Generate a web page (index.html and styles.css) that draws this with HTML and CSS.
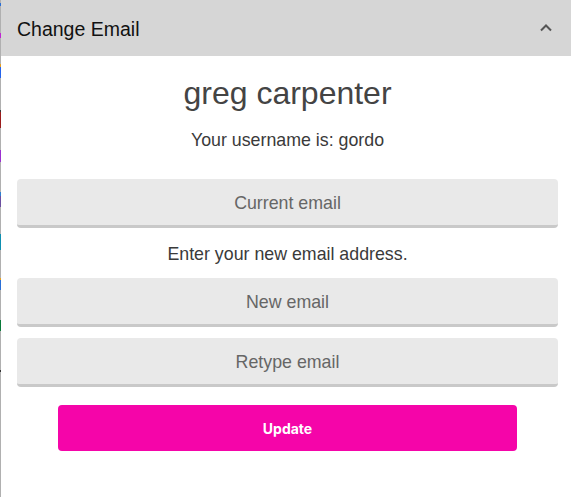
FILE: index.html
```html
<!DOCTYPE html>
<html lang="en">
<head>
<meta charset="utf-8">
<title>Change Email</title>
<link rel="stylesheet" href="styles.css">
</head>
<body>
<div class="page">
  <div class="edge"></div>
  <section class="panel">
    <header class="panel-head">
      <span class="panel-title">Change Email</span>
      <svg class="chevron" width="14" height="9" viewBox="0 0 14 9" aria-hidden="true">
        <path d="M2 7.5 L7 2.5 L12 7.5" fill="none" stroke="#555" stroke-width="2"/>
      </svg>
    </header>
    <form class="panel-body">
      <h1 class="name">greg carpenter</h1>
      <p class="username">Your username is: gordo</p>
      <input class="field first" type="email" placeholder="Current email">
      <p class="hint">Enter your new email address.</p>
      <input class="field" type="email" placeholder="New email">
      <input class="field second" type="email" placeholder="Retype email">
      <button class="update" type="button">Update</button>
    </form>
  </section>
</div>
</body>
</html>
```

FILE: styles.css
```css
* { box-sizing: border-box; }
html, body { margin: 0; padding: 0; background: #fff; }
body { font-family: "Liberation Sans", Arial, sans-serif; }

.page {
  display: flex;
  width: 575px;
  height: 497px;
  overflow: hidden;
}

.edge {
  width: 1px;
  flex: none;
  background: linear-gradient(to bottom,
    #b0b0b0 0, #b0b0b0 3px, #2a6fd6 3px, #2a6fd6 6px,
    #b0b0b0 6px, #b0b0b0 33px, #c026d3 33px, #c026d3 38px,
    #b0b0b0 38px, #b0b0b0 64px, #e8a020 64px, #e8a020 67px,
    #2563eb 67px, #2563eb 78px, #b0b0b0 78px, #b0b0b0 110px,
    #3a3a3a 110px, #3a3a3a 112px, #9b1c1c 112px, #9b1c1c 128px,
    #b0b0b0 128px, #b0b0b0 150px, #9b30d0 150px, #9b30d0 162px,
    #b0b0b0 162px, #b0b0b0 192px, #2f7fd0 192px, #2f7fd0 196px, #6b4fa0 196px, #6b4fa0 207px,
    #b0b0b0 207px, #b0b0b0 234px, #0e8fb0 234px, #0e8fb0 250px,
    #b0b0b0 250px, #b0b0b0 278px, #e8a020 278px, #e8a020 280px, #2a6fd6 280px, #2a6fd6 290px,
    #b0b0b0 290px, #b0b0b0 320px, #0a7a3a 320px, #0a7a3a 331px,
    #b0b0b0 331px, #b0b0b0 370px, #333 370px, #333 372px,
    #b0b0b0 372px, #b0b0b0 100%);
}

.panel {
  width: 570px;
  flex: none;
  display: flex;
  flex-direction: column;
}

.panel-head {
  height: 56px;
  background: #d6d6d6;
  display: flex;
  align-items: center;
  justify-content: space-between;
  padding: 0 18px 0 16px;
}

.panel-title {
  font-size: 19.5px;
  color: #111;
  padding-top: 3px;
}

.chevron { display: block; margin-top: -1px; }

.panel-body {
  display: flex;
  flex-direction: column;
  align-items: stretch;
  padding: 0 13px 0 16px;
  margin: 0;
}

.name {
  margin: 18px 0 0;
  font-weight: 400;
  font-size: 32px;
  line-height: 38px;
  color: #444;
  text-align: center;
}

.username, .hint {
  margin: 0;
  font-size: 17.8px;
  line-height: 22px;
  color: #3a3a3a;
  text-align: center;
}
.username { margin-top: 17px; }
.hint { margin-top: 15px; }

.field {
  display: block;
  width: 100%;
  height: 49px;
  margin: 13px 0 0;
  border: none;
  border-bottom: 3px solid #c9c9c9;
  border-radius: 4px;
  background: #e9e9e9;
  font-family: "Liberation Sans", Arial, sans-serif;
  font-size: 17.8px;
  color: #333;
  text-align: center;
  outline: none;
  padding: 3px 0 0;
}
.field::placeholder { color: #666; }
.field.first { margin-top: 28px; }
.field.second { margin-top: 11px; }

.update {
  display: block;
  width: 459px;
  height: 46px;
  margin: 18px auto 0;
  border: none;
  border-radius: 4px;
  background: #f505a9;
  color: #fff;
  font-family: Inter, "Liberation Sans", sans-serif;
  font-weight: 700;
  font-size: 14px;
  cursor: pointer;
}
```
